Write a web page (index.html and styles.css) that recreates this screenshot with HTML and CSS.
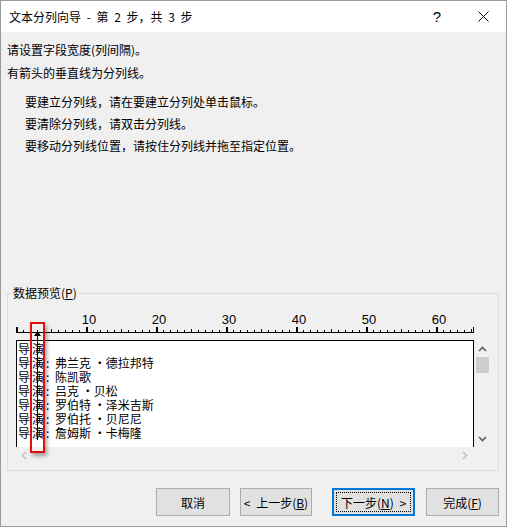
FILE: index.html
```html
<!DOCTYPE html>
<html lang="zh-CN">
  <head>
    <meta charset="UTF-8" />
    <title>文本分列向导 - 第 2 步，共 3 步</title>
    <link rel="stylesheet" href="styles.css">
  </head>
  <body>
    <div class="dialog">
      <!-- 标题栏 -->
      <div class="titlebar">
        <span class="title">文本分列向导 - 第 2 步，共 3 步</span>
        <span class="tb-btn help">?</span>
        <span class="tb-btn close">
          <svg width="11" height="11" viewBox="0 0 11 11">
            <path d="M0.5 0.5 L10.5 10.5 M10.5 0.5 L0.5 10.5" stroke="#000" stroke-width="1" fill="none" />
          </svg>
        </span>
      </div>

      <div class="content">
        <div class="intro">
          <p>请设置字段宽度(列间隔)。</p>
          <p>有箭头的垂直线为分列线。</p>
        </div>

        <div class="hints">
          <p>要建立分列线，请在要建立分列处单击鼠标。</p>
          <p>要清除分列线，请双击分列线。</p>
          <p>要移动分列线位置，请按住分列线并拖至指定位置。</p>
        </div>

        <fieldset class="group">
          <legend>数据预览(<u>P</u>)</legend>

          <div class="preview-area">
            <div class="ruler">
              <div class="ruler-labels">
                <span>10</span><span>20</span><span>30</span><span>40</span><span>50</span><span>60</span>
              </div>
              <div class="ruler-ticks"></div>
            </div>

            <div class="preview-row">
              <div class="preview">
                <div class="row"><span class="k">导演</span></div>
                <div class="row"><span class="k">导演</span><span class="c">:</span><span>弗兰克 ·德拉邦特</span></div>
                <div class="row"><span class="k">导演</span><span class="c">:</span><span>陈凯歌</span></div>
                <div class="row"><span class="k">导演</span><span class="c">:</span><span>吕克 ·贝松</span></div>
                <div class="row"><span class="k">导演</span><span class="c">:</span><span>罗伯特 ·泽米吉斯</span></div>
                <div class="row"><span class="k">导演</span><span class="c">:</span><span>罗伯托 ·贝尼尼</span></div>
                <div class="row"><span class="k">导演</span><span class="c">:</span><span>詹姆斯 ·卡梅隆</span></div>
              </div>
              <div class="vscroll">
                <svg width="9" height="6" viewBox="0 0 9 6"><path d="M1 5 L4.5 1.5 L8 5" stroke="#606060" stroke-width="1.6" fill="none" /></svg>
                <div class="thumb"></div>
                <svg class="down" width="9" height="6" viewBox="0 0 9 6"><path d="M1 1 L4.5 4.5 L8 1" stroke="#606060" stroke-width="1.6" fill="none" /></svg>
              </div>
            </div>

            <div class="hscroll">
              <svg width="6" height="9" viewBox="0 0 6 9"><path d="M5 1 L1.5 4.5 L5 8" stroke="#c2c2c2" stroke-width="1.6" fill="none" /></svg>
              <svg width="6" height="9" viewBox="0 0 6 9"><path d="M1 1 L4.5 4.5 L1 8" stroke="#c2c2c2" stroke-width="1.6" fill="none" /></svg>
            </div>

            <!-- 分列线 -->
            <div class="break-line">
              <svg width="7" height="6" viewBox="0 0 7 6"><path d="M3.5 0 L7 5 L0 5 Z" fill="#000" /></svg>
            </div>
            <!-- 红框标注 -->
            <div class="mark"></div>
          </div>
        </fieldset>

        <div class="footer">
          <button class="btn cancel">取消</button>
          <button class="btn back">&lt; 上一步(<u>B</u>)</button>
          <button class="btn next"><span class="focus">下一步(<u>N</u>) &gt;</span></button>
          <button class="btn finish">完成(<u>F</u>)</button>
        </div>
      </div>
    </div>
  </body>
</html>
```

FILE: styles.css
```css
* {
  box-sizing: border-box;
  margin: 0;
  padding: 0;
}

body {
  width: 507px;
  height: 527px;
  background: #f0f0f0;
  font-family: "Noto Sans CJK SC", "Microsoft YaHei", sans-serif;
  font-size: 12px;
  color: #000;
  overflow: hidden;
}

.dialog {
  width: 507px;
  height: 527px;
  border: 1px solid #9a9a9a;
  display: flex;
  flex-direction: column;
}

.titlebar {
  height: 31px;
  background: #fff;
  display: flex;
  align-items: center;
  flex-shrink: 0;
}

.title {
  flex: 1;
  padding-left: 8px;
  font-size: 12px;
  word-spacing: 3px;
}

.tb-btn {
  width: 46px;
  height: 31px;
  display: flex;
  align-items: center;
  justify-content: center;
}

.help {
  font-family: "Liberation Sans", sans-serif;
  font-size: 15px;
}

.content {
  flex: 1;
  background: #f0f0f0;
  padding: 6px 0 0 6px;
}

.intro p {
  line-height: 23px;
}

.hints {
  margin-top: 7px;
  padding-left: 18px;
}

.hints p {
  line-height: 22px;
}

/* 数据预览分组 */
.group {
  margin: 128px 7px 0 0;
  border: 1px solid #dcdcdc;
  padding: 13px 7px 6px 8px;
}

.group legend {
  margin-left: -5px;
  padding: 0 2px;
  line-height: 16px;
  font-size: 12px;
}

.preview-area {
  position: relative;
  width: 474px;
}

.ruler {
  width: 458px;
}

.ruler-labels {
  display: flex;
  padding-left: 38px;
  height: 12px;
  line-height: 12px;
  font-family: "Liberation Sans", sans-serif;
  font-size: 13px;
}

.ruler-labels span {
  width: 70px;
  text-align: center;
}

.ruler-ticks {
  height: 7px;
  border-bottom: 1px solid #000;
  background-image:
    repeating-linear-gradient(to right, #000 0 1px, transparent 1px 7px),
    repeating-linear-gradient(to right, #000 0 1px, transparent 1px 35px),
    repeating-linear-gradient(to right, #000 0 2px, transparent 2px 70px),
    linear-gradient(#000, #000);
  background-size: 100% 2px, 100% 3px, 100% 5px, 1px 5px;
  background-position: left bottom, left bottom, left bottom, right bottom;
  background-repeat: no-repeat;
}

.preview-row {
  display: flex;
  margin-top: 7px;
}

.preview {
  width: 458px;
  height: 107px;
  background: #fff;
  border: 1px solid #000;
  border-bottom: none;
  padding: 1px 0 0 1px;
}

.row {
  display: flex;
  height: 14px;
  line-height: 14px;
  white-space: nowrap;
}

.row .k {
  width: 28px;
  letter-spacing: 2px;
}

.row .c {
  width: 9px;
}

.vscroll {
  width: 16px;
  height: 107px;
  display: flex;
  flex-direction: column;
  align-items: center;
  padding-top: 6px;
}

.vscroll .thumb {
  width: 13px;
  height: 16px;
  background: #cdcdcd;
  margin-top: 5px;
}

.vscroll .down {
  margin-top: auto;
  margin-bottom: 5px;
}

.hscroll {
  width: 458px;
  height: 17px;
  display: flex;
  align-items: center;
  justify-content: space-between;
  padding: 0 6px 0 5px;
}

.break-line {
  position: absolute;
  left: 18px;
  top: 17px;
  width: 7px;
  height: 109px;
  background: linear-gradient(#000, #000) 3px 0 / 1px 100% no-repeat;
}

.break-line svg {
  display: block;
}

.mark {
  position: absolute;
  left: 14px;
  top: 8px;
  width: 15px;
  height: 131px;
  border: 2px solid #e01010;
  box-shadow: 2px 3px 4px rgba(0, 0, 0, 0.35);
}

/* 底部按钮 */
.footer {
  display: flex;
  justify-content: flex-end;
  margin-top: 17px;
  padding-right: 7px;
}

.btn {
  height: 28px;
  width: 73px;
  margin-left: 10px;
  background: #e1e1e1;
  border: 1px solid #adadad;
  font-family: "Noto Sans CJK SC", sans-serif;
  font-size: 12px;
  word-spacing: 3px;
  color: #000;
}

.btn.cancel {
  width: 74px;
}

.btn.back {
  width: 72px;
}

.btn.next {
  width: 83px;
  margin-left: 20px;
  border: 2px solid #0078d7;
  padding: 2px;
}

.btn.next .focus {
  display: flex;
  align-items: center;
  justify-content: center;
  height: 100%;
  border: 1px dotted #000;
}

.btn.finish {
  margin-left: 11px;
}
```
